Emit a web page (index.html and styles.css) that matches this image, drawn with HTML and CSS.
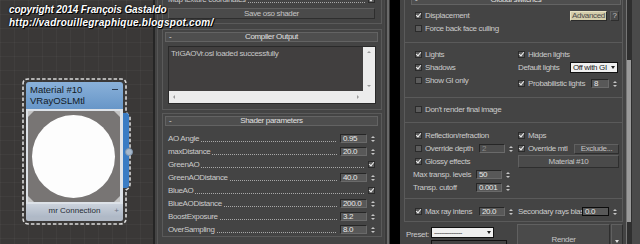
FILE: index.html
```html
<!DOCTYPE html>
<html><head><meta charset="utf-8"><link rel="stylesheet" href="styles.css"></head>
<body>
<div class="canvas">
  <svg class="outline" width="155" height="244" viewBox="0 0 155 244"><path d="M23,84 Q23,79 28,79 L121,79 Q126,79 126,84 L126,110 Q126,114 130,116 L130,184 Q130,188 126,190 L126,218 Q126,224 120,224 L29,224 Q23,224 23,218 Z" fill="none" stroke="#dadada" stroke-width="1.6" stroke-dasharray="3.5 2"/></svg>
  <div class="node-tab"></div>
  <div class="node">
    <div class="nhead"><div class="nt1">Material #10<span class="nmin"></span></div><div class="nt2">VRayOSLMtl</div></div>
    <div class="nprev"><div class="nsq"><span class="cn tl"></span><span class="cn tr"></span><span class="cn bl"></span><span class="cn br"></span><div class="ball"></div></div></div>
    <div class="nfoot">mr Connection<span class="nplus">+</span></div>
    <div class="nbase"></div>
  </div>
  <div class="node-pin"></div>
</div>

<div class="mid">
  <div class="frame f-top">
    <div class="prow"><span>Map texture coordinates</span><span class="dots"></span><span class="cb on"></span></div>
    <div class="btn save">Save oso shader</div>
  </div>
  <div class="frame f-comp">
    <div class="rhead"><span class="minus">-</span>Compiler Output</div>
    <div class="tarea">
      <div class="ttext">TrIGAOVr.osl loaded successfully</div>
      <div class="vsb"><span class="au"></span><span class="ad"></span></div>
      <div class="hsb"><span class="al"></span><span class="ar"></span></div>
      <div class="sbc"></div>
    </div>
  </div>
  <div class="frame f-params">
    <div class="rhead"><span class="minus">-</span>Shader parameters</div>
    <div class="params">
      <div class="prow"><span>AO Angle</span><span class="dots"></span><span class="fld">0.95</span><span class="spin"></span></div>
      <div class="prow"><span>maxDistance</span><span class="dots"></span><span class="fld">20.0</span><span class="spin"></span></div>
      <div class="prow"><span>GreenAO</span><span class="dots"></span><span class="cb on"></span></div>
      <div class="prow"><span>GreenAODistance</span><span class="dots"></span><span class="fld">40.0</span><span class="spin"></span></div>
      <div class="prow"><span>BlueAO</span><span class="dots"></span><span class="cb on"></span></div>
      <div class="prow"><span>BlueAODistance</span><span class="dots"></span><span class="fld">200.0</span><span class="spin"></span></div>
      <div class="prow"><span>BoostExposure</span><span class="dots"></span><span class="fld">3.2</span><span class="spin"></span></div>
      <div class="prow"><span>OverSampling</span><span class="dots"></span><span class="fld">8.0</span><span class="spin"></span></div>
    </div>
  </div>
</div>

<div class="gutter"></div>

<div class="right">
  <div class="rmain">
    <div class="rframe">
      <div class="rhead g"><span class="minus">-</span>Global switches</div>
      <div class="sec s1">
        <div class="c span2"><span class="cb on"></span>Displacement<span class="btn adv">Advanced</span><span class="btn q">?</span></div>
        <div class="c"><span class="cb"></span>Force back face culling</div>
      </div>
      <div class="sec s2">
        <div class="c"><span class="cb on"></span>Lights</div>
        <div class="c"><span class="cb on"></span>Hidden lights</div>
        <div class="c"><span class="cb on"></span>Shadows</div>
        <div class="c">Default lights<span class="dd">Off with GI</span></div>
        <div class="c"><span class="cb"></span>Show GI only</div>
        <div class="c low"><span class="cb on"></span>Probabilistic lights<span class="fld f18">8</span><span class="spin r2"></span></div>
      </div>
      <div class="sec s3">
        <div class="c"><span class="cb"></span>Don't render final image</div>
      </div>
      <div class="sec s4">
        <div class="c"><span class="cb on"></span>Reflection/refraction</div>
        <div class="c"><span class="cb on"></span>Maps</div>
        <div class="c"><span class="cb"></span><span class="lw51">Override depth</span><span class="fld dis">2</span><span class="spin"></span></div>
        <div class="c"><span class="cb on"></span>Override mtl<span class="btn excl">Exclude...</span></div>
        <div class="c"><span class="cb on"></span>Glossy effects</div>
        <div class="c"><span class="btn mat">Material #10</span></div>
        <div class="c nocb"><span class="lw63">Max transp. levels</span><span class="fld">50</span><span class="spin"></span></div>
        <div class="c"></div>
        <div class="c nocb"><span class="lw63">Transp. cutoff</span><span class="fld">0.001</span><span class="spin"></span></div>
        <div class="c"></div>
      </div>
      <div class="sec s5">
        <div class="c"><span class="cb on"></span><span class="lw51">Max ray intens</span><span class="fld">20.0</span><span class="spin"></span></div>
        <div class="c"><span class="lw64">Secondary rays bias</span><span class="fld focus">0.0</span><span class="spin r2"></span></div>
      </div>
    </div>
    <div class="bottom">
      <div class="preset">
        <span class="plabel">Preset:</span>
        <div class="pboxes"><span class="pdd">----------------</span><span class="pdd2"></span></div>
      </div>
      <div class="btn render">Render</div>
      <div class="btn rarrow"></div>
    </div>
  </div>
  <div class="vscroll"><div class="thumb"></div></div>
  <div class="redge"></div>
</div>

<div class="credit"><div class="cl1">copyright 2014 François Gastaldo</div><div class="cl2">http://vadrouillegraphique.blogspot.com/</div></div>
</body></html>
```
FILE: styles.css
```css
*{box-sizing:border-box;margin:0;padding:0}
body{width:640px;height:244px;overflow:hidden;background:#000;display:flex;position:relative;font-family:"Liberation Sans",Arial,sans-serif;font-size:8px;letter-spacing:-0.35px;color:#cbcbcb;line-height:1}

/* ---------- node canvas ---------- */
.canvas{position:relative;width:155px;height:244px;flex:none;background-color:#3a3837;background-image:linear-gradient(90deg,rgba(255,255,255,.03) 1px,transparent 1px),linear-gradient(rgba(255,255,255,.03) 1px,transparent 1px);background-size:14px 14px;border-right:2px solid #252525}
.outline{position:absolute;left:0;top:0}
.node-tab{position:absolute;left:122px;top:113px;width:7px;height:75px;background:#3a7cc4;border-radius:0 3px 3px 0}
.node-pin{position:absolute;left:125px;top:148px;width:8px;height:8px;border-radius:50%;background:#a8b9cc;border:1px solid #7f95ad}
.node{position:absolute;left:26px;top:82px;width:97px;height:139px;display:flex;flex-direction:column;letter-spacing:0}
.nhead{height:27px;background:linear-gradient(#8ab1d9,#6796c8);border-radius:3px 3px 0 0;padding:2px 3px 0 4px;color:#121a24;font-size:9.5px}
.nt1{display:flex;justify-content:space-between;align-items:center;height:11px}
.nmin{width:6px;height:1px;background:#2a3a50;margin-right:2px}
.nt2{height:11px;line-height:11px}
.nprev{height:95px;background:#dde2e8;padding:2px 3px 2px 2px}
.nsq{position:relative;height:91px;background:#787574;overflow:hidden}
.ball{position:absolute;left:4px;top:4px;width:83px;height:83px;border-radius:50%;background:#fdfdfd}
.cn{position:absolute;width:0;height:0;border:3px solid transparent}
.cn.tl{left:0;top:0;border-top-color:#c4c4c4;border-left-color:#c4c4c4}
.cn.tr{right:0;top:0;border-top-color:#c4c4c4;border-right-color:#c4c4c4}
.cn.bl{left:0;bottom:0;border-bottom-color:#c4c4c4;border-left-color:#c4c4c4}
.cn.br{right:0;bottom:0;border-bottom-color:#c4c4c4;border-right-color:#c4c4c4}
.nfoot{position:relative;height:13px;background:linear-gradient(#cbd2dc,#aeb8c6);color:#262b33;font-size:8px;text-align:center;line-height:13px}
.nplus{position:absolute;right:4px;top:0;color:#6c7686}
.nbase{height:4px;background:#b0b9c6;border-radius:0 0 2px 2px}

/* ---------- middle panel ---------- */
.mid{width:229px;flex:none;height:244px;background:linear-gradient(90deg,#444 0 2px,#565656 2px 3px,#444 3px);padding:0 2px 0 7px;overflow:hidden}
.frame{border:1px solid #5a5a5a}
.f-top{margin-top:-7px;padding:0 5px 4px 5px}
.f-top .prow{padding:0;height:11px}
.f-top .cb{margin-right:1px}
.btn{background:#4a4a4a;border:1px solid;border-color:#606060 #2e2e2e #2e2e2e #606060;color:#c4c4c4;display:flex;align-items:center;justify-content:center;white-space:nowrap}
.save{height:11px;margin:3px 1px 0 0}
.f-comp{margin-top:5px;padding-bottom:5px}
.f-params{margin-top:3px}
.rhead{position:relative;height:10px;margin:2px 3px 0 2px;background:#4e4e4e;border:1px solid #636363;color:#e0e0e0;text-align:center;line-height:8px}
.minus{position:absolute;left:3px;top:0}
.tarea{margin:4px 5px 0;height:58px;border:1px solid #2a2a2a;display:grid;grid-template-columns:1fr 12px;grid-template-rows:1fr 12px}
.ttext{background:#413f3f;padding:3px 2px;color:#c8c8c8}
.vsb{background:#ececec;display:flex;flex-direction:column;justify-content:space-between;align-items:center;padding:4px 0}
.hsb{background:#ececec;display:flex;justify-content:space-between;align-items:center;padding:0 4px}
.sbc{background:#ececec}
.au{border:2px solid transparent;border-top:0;border-bottom:2px solid #9a9a9a}
.ad{border:2px solid transparent;border-bottom:0;border-top:2px solid #9a9a9a}
.al{border:2px solid transparent;border-left:0;border-right:2px solid #9a9a9a}
.ar{border:2px solid transparent;border-right:0;border-left:2px solid #9a9a9a}
.params{margin-top:6px}
.prow{height:13px;display:flex;align-items:center;padding:0 5px;white-space:nowrap}
.dots{flex:1;align-self:flex-end;height:1px;margin:0 3px 3px 2px;background-image:linear-gradient(90deg,#a8a8a8 1px,transparent 1px);background-size:2px 1px}
.f-top .dots{margin-bottom:2px}
.prow .fld{width:27px}
.prow .cb{margin-right:1px}
.fld{height:9px;background:#585858;border:1px solid;border-color:#262626 #6a6a6a #6a6a6a #262626;color:#e8e8e8;padding-left:2px;line-height:7px;flex:none;white-space:nowrap;overflow:hidden}
.fld.dis{color:#8a8a8a;background:#4d4d4d}
.fld.focus{border-color:#0c0c0c;position:relative}
.spin{width:6px;height:9px;display:flex;flex-direction:column;justify-content:center;gap:2px;align-items:center;flex:none;margin-left:3px}
.spin::before{content:"";border:2px solid transparent;border-top:0;border-bottom:2px solid #c6c6c6}
.spin::after{content:"";border:2px solid transparent;border-bottom:0;border-top:2px solid #c6c6c6}
.cb{width:7px;height:7px;background:#5c5c5c;border:1px solid #2b2b2b;position:relative;flex:none}
.cb.on::after{content:"";position:absolute;left:1.4px;top:-0.6px;width:2px;height:4px;border:solid #f2f2f2;border-width:0 1.3px 1.3px 0;transform:rotate(40deg)}

/* ---------- gutter ---------- */
.gutter{width:16px;flex:none;height:244px;background:linear-gradient(90deg,#4a4a4a 0 1px,#393939 1px 3px,#6a6a6a 3px 5px,#000 6px)}

/* ---------- right panel ---------- */
.right{width:240px;flex:none;display:flex;height:244px}
.rmain{width:226px;flex:none;background:#444;padding:0 3px 0 4px;display:flex;flex-direction:column}
.rframe{margin-top:-8px;border:1px solid #5a5a5a}
.rhead.g{margin:2px 1px 0 6px}
.sec{display:grid;grid-template-columns:103px 1fr;grid-auto-rows:13px;padding:4px 2px 7px 10px;border-bottom:1px solid #5a5a5a}
.s2{padding:5px 2px 10px 10px}
.s3{padding:5px 2px 6px 10px}
.s4{padding:6px 2px 4px 10px}
.s5{padding:6px 2px 3px 10px;border-bottom:0}
.c{display:flex;align-items:center;gap:3px;white-space:nowrap}
.c .spin{margin-left:0}
.span2{grid-column:1/-1}
.low{padding-top:6px}
.nocb{margin-left:-2px}
.lw51{width:51px;flex:none}
.lw63{width:60px;flex:none}
.lw64{width:61px;flex:none;overflow:visible}
.c .fld{width:26px}
.s5 .c:last-child .fld{width:27px}
.fld.f18{width:18px;margin-left:auto}
.spin.r2{margin-right:2px}
.adv{margin-left:auto;width:37px;height:10px;background:#d4cdab;color:#4a4a4a;border-color:#e8e2c4 #2a2a2a #2a2a2a #e8e2c4}
.q{width:9px;height:10px;margin-right:1px}
.dd{margin-left:auto;margin-right:2px;width:48px;height:11px;background:#f0f0f0;border:1px solid #111;color:#222;padding-left:2px;display:flex;align-items:center;position:relative}
.dd::after{content:"";position:absolute;right:2px;top:3px;border:2.5px solid transparent;border-bottom:0;border-top:3px solid #222}
.excl{margin-left:auto;margin-right:1px;width:45px;height:10px}
.mat{width:101px;height:13px}

.bottom{flex:1;display:flex;align-items:flex-start}
.preset{width:114px;display:flex;padding:5px 0 0 2px}
.plabel{width:25px;margin-top:4px;flex:none}
.pboxes{display:flex;flex-direction:column;gap:2px}
.pdd{width:63px;height:11px;background:#efefef;border:1px solid #111;color:#333;position:relative;padding-left:2px;line-height:9px;letter-spacing:-0.6px;font-size:7px}
.pdd::after{content:"";position:absolute;right:2px;top:3px;border:2.5px solid transparent;border-bottom:0;border-top:3px solid #222}
.pdd2{width:76px;height:8px;border:1px solid #111;border-bottom:0}
.render{width:94px;height:24px;margin-top:2px;padding-top:8px}
.rarrow{width:12px;height:24px;margin-top:2px;margin-left:1px;position:relative}
.rarrow::after{content:"";position:absolute;left:3px;top:15px;border:2.5px solid transparent;border-bottom:0;border-top:3px solid #ddd}
.vscroll{width:6px;flex:none;background:#2f2f2f;border-left:1px solid #767676}
.thumb{margin-top:60px;height:162px;width:4px;background:#9a9a9a}
.redge{width:8px;flex:none;background:#4a4a4a}

/* ---------- overlay credit ---------- */
.credit{position:absolute;left:9px;top:3px;color:#fff;font-weight:bold;font-style:italic;font-size:10px;line-height:13px;text-shadow:1px 1px 0 #000,0 0 2px #000;white-space:nowrap}
.cl1{letter-spacing:-0.1px}
.cl2{letter-spacing:0.25px}
```
